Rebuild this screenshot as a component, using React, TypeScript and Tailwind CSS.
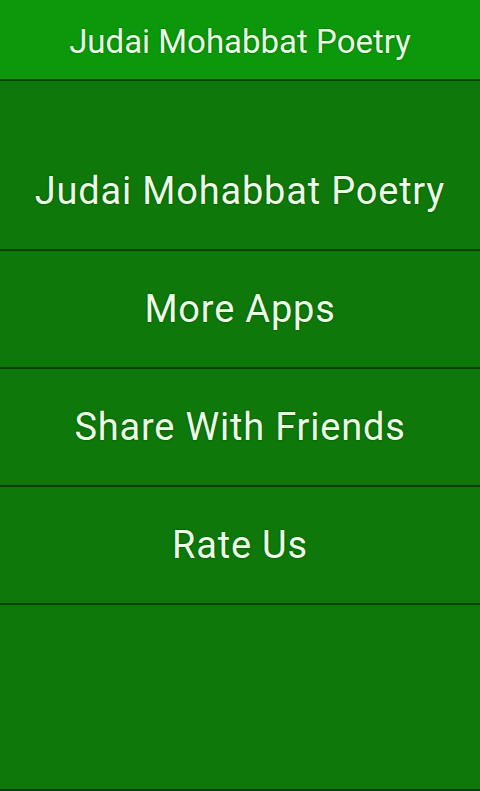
export default function App() {
  const items = ["Judai Mohabbat Poetry", "More Apps", "Share With Friends", "Rate Us"];
  return (
    <div className="w-[480px] h-[791px] flex flex-col bg-[#0e780a] overflow-hidden" style={{ fontFamily: "Roboto, 'Liberation Sans', sans-serif" }}>
      <div className="h-[81px] shrink-0 bg-[#0b990b] flex items-center justify-center border-b-2 border-[#0a3d08] pt-[4px]">
        <span className="text-[33px] text-[#e8ffe2] [text-shadow:0_0_2px_#0a4a08]">Judai Mohabbat Poetry</span>
      </div>
      <div className="flex-1 flex flex-col pt-[52px]">
        {items.map((t) => (
          <div key={t} className="h-[118px] flex items-center justify-center border-b-2 border-[#0a3d08]">
            <span className="text-[38px] tracking-[0.8px] text-[#eaffe4] [text-shadow:0_0_2px_#063a04]">{t}</span>
          </div>
        ))}
        <div className="flex-1" />
        <div className="h-[2px] bg-[#0a3d08]" />
      </div>
    </div>
  );
}
